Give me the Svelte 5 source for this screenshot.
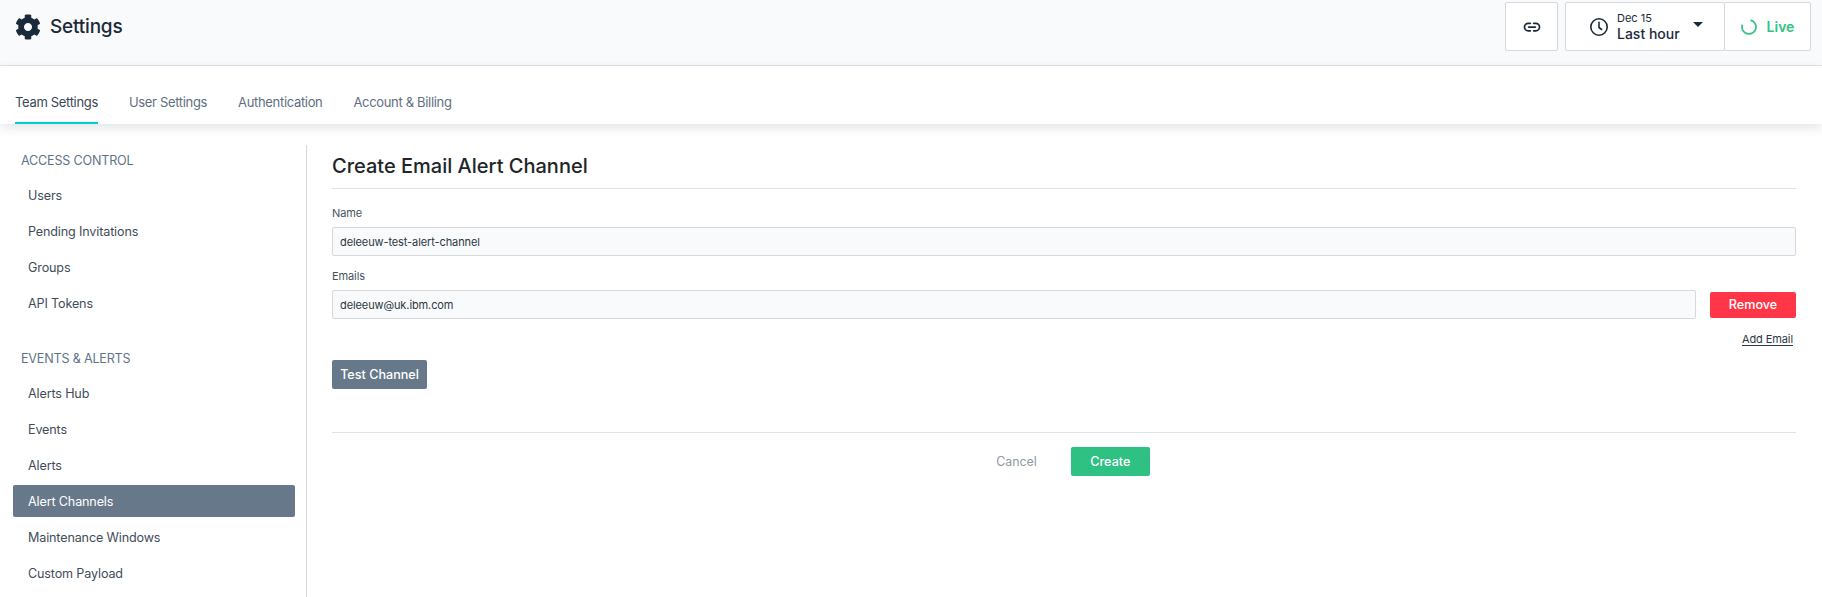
<script>
  const tabs = ['Team Settings', 'User Settings', 'Authentication', 'Account & Billing'];
  const groups = [
    { title: 'ACCESS CONTROL', items: ['Users', 'Pending Invitations', 'Groups', 'API Tokens'] },
    { title: 'EVENTS & ALERTS', items: ['Alerts Hub', 'Events', 'Alerts', 'Alert Channels', 'Maintenance Windows', 'Custom Payload'] }
  ];
</script>

<div class="page">
  <header class="topbar">
    <div class="brand">
      <svg class="gear" viewBox="0 0 512 512" width="26" height="26" aria-hidden="true">
        <path fill="#1b2a3a" d="M487.4 315.7l-42.6-24.6c4.3-23.2 4.3-47 0-70.2l42.6-24.6c4.9-2.8 7.1-8.6 5.5-14-11.1-35.6-30-67.8-54.7-94.6-3.8-4.1-10-5.1-14.8-2.3L380.8 110c-17.9-15.4-38.5-27.3-60.8-35.1V25.8c0-5.6-3.9-10.5-9.4-11.7-36.7-8.2-74.3-7.8-109.2 0-5.5 1.2-9.4 6.1-9.4 11.7V75c-22.2 7.9-42.8 19.8-60.8 35.1L88.7 85.5c-4.9-2.8-11-1.9-14.8 2.3-24.7 26.7-43.6 58.9-54.7 94.6-1.7 5.4.6 11.2 5.5 14L67.3 221c-4.3 23.2-4.3 47 0 70.2l-42.6 24.6c-4.9 2.8-7.1 8.6-5.5 14 11.1 35.6 30 67.8 54.7 94.6 3.8 4.1 10 5.1 14.8 2.3l42.6-24.6c17.9 15.4 38.5 27.3 60.8 35.1v49.2c0 5.6 3.9 10.5 9.4 11.7 36.7 8.2 74.3 7.8 109.2 0 5.5-1.2 9.4-6.1 9.4-11.7v-49.2c22.2-7.9 42.8-19.8 60.8-35.1l42.6 24.6c4.9 2.8 11 1.9 14.8-2.3 24.7-26.7 43.6-58.9 54.7-94.6 1.5-5.5-.7-11.3-5.6-14.1zM256 336c-44.1 0-80-35.9-80-80s35.9-80 80-80 80 35.9 80 80-35.9 80-80 80z"/>
      </svg>
      <h1>Settings</h1>
    </div>
    <div class="actions">
      <button class="box link-btn" aria-label="Copy link">
        <svg viewBox="0 0 24 24" width="20" height="20" fill="none" stroke="#1b2a3a" stroke-width="2.1" stroke-linecap="round">
          <path d="M10 7.5H7.5a4.5 4.5 0 0 0 0 9H10M14 7.5h2.5a4.5 4.5 0 0 1 0 9H14M8 12h8"/>
        </svg>
      </button>
      <div class="time-group">
        <button class="box time">
          <svg viewBox="0 0 20 20" width="20" height="20" fill="none" stroke="#1b2a3a" stroke-width="1.6" stroke-linecap="round" stroke-linejoin="round">
            <circle cx="10" cy="10" r="8.2"/><path d="M10 5.2V10.5l2.6 2"/>
          </svg>
          <span class="time-text"><span class="date">Dec 15</span><span class="range">Last hour</span></span>
          <span class="caret"></span>
        </button>
        <button class="box live">
          <svg viewBox="0 0 16 16" width="16" height="16" fill="none" stroke="#31c283" stroke-width="1.7">
            <path d="M9.4 1.1A7 7 0 1 1 1.4 5.6"/>
          </svg>
          <span>Live</span>
        </button>
      </div>
    </div>
  </header>

  <nav class="tabs">
    {#each tabs as tab, i}
      <a href="#top" class="tab" class:active={i === 0}>{tab}</a>
    {/each}
  </nav>

  <div class="body">
    <aside class="side">
      <div class="side-inner">
        {#each groups as g}
          <section class="group">
            <h3>{g.title}</h3>
            {#each g.items as item}
              <a href="#top" class="item" class:current={item === 'Alert Channels'}>{item}</a>
            {/each}
          </section>
        {/each}
      </div>
    </aside>

    <main class="main">
      <h2>Create Email Alert Channel</h2>
      <div class="form">
        <label class="lbl" for="name">Name</label>
        <input id="name" class="field" value="deleeuw-test-alert-channel" />
        <label class="lbl second" for="email">Emails</label>
        <div class="email-row">
          <input id="email" class="field" value="deleeuw@uk.ibm.com" />
          <button class="remove">Remove</button>
        </div>
        <div class="add-row"><a href="#top" class="add">Add Email</a></div>
        <button class="test">Test Channel</button>
      </div>
      <div class="footer">
        <a href="#top" class="cancel">Cancel</a>
        <button class="create">Create</button>
      </div>
    </main>
  </div>
</div>

<style>
  :global(body) {
    margin: 0;
    background: #fff;
    font-family: Inter, "Liberation Sans", sans-serif;
    overflow: hidden;
  }
  .page { width: 1822px; height: 597px; overflow: hidden; color: #1b2a3a; }
  button { font-family: inherit; cursor: pointer; }
  a { text-decoration: none; }

  .topbar {
    box-sizing: border-box;
    height: 66px;
    background: #f9fafc;
    border-bottom: 1px solid #dfe4ea;
    display: flex;
    justify-content: space-between;
    padding: 2px 11px 0 15px;
  }
  .brand { display: flex; align-items: center; gap: 9px; height: 50px; }
  .gear { display: block; }
  h1 { margin: 0; font-size: 19px; letter-spacing: -0.2px; font-weight: 500; line-height: 24px; color: #1b2a3a; }
  .actions { display: flex; gap: 7px; height: 49px; }
  .box {
    box-sizing: border-box;
    height: 49px;
    background: #fff;
    border: 1px solid #d5d9de;
    border-radius: 2px;
    padding: 0;
    display: flex;
    align-items: center;
    justify-content: center;
  }
  .link-btn { width: 53px; }
  .time-group { display: flex; }
  .time { width: 160px; justify-content: flex-start; padding-left: 23px; }
  .time-text { display: flex; flex-direction: column; align-items: flex-start; margin-left: 8px; }
  .date { font-size: 11px; line-height: 14px; color: #1b2a3a; }
  .range { font-size: 14px; font-weight: 500; line-height: 18px; color: #1b2a3a; }
  .caret {
    width: 0; height: 0;
    margin-left: 13px;
    margin-top: -4px;
    border-left: 5px solid transparent;
    border-right: 5px solid transparent;
    border-top: 5px solid #1b2a3a;
  }
  .live {
    width: 87px;
    gap: 10px;
    margin-left: -1px;
    color: #31c283;
    font-size: 14px;
    font-weight: 600;
  }

  .tabs {
    height: 58px;
    box-sizing: border-box;
    padding: 0 15px;
    display: flex;
    gap: 31px;
    align-items: flex-end;
    background: #fff;
    box-shadow: 0 4px 10px rgba(27, 42, 58, 0.12);
    position: relative;
  }
  .tab {
    font-size: 13px;
    letter-spacing: -0.33px;
    line-height: 16px;
    color: #5f6f7f;
    padding-bottom: 12px;
    border-bottom: 2px solid transparent;
  }
  .tab.active { color: #3a4856; border-bottom-color: #00cfcf; }

  .body { display: flex; padding-top: 21px; }
  .side { width: 307px; flex: none; }
  .side-inner {
    box-sizing: border-box;
    height: 460px;
    border-right: 1px solid #d5d9de;
    padding: 1px 11px 0 13px;
  }
  .group + .group { margin-top: 25px; }
  h3 {
    margin: 0;
    padding-left: 8px;
    font-size: 12.6px;
    letter-spacing: -0.2px;
    font-weight: 400;
    height: 29px;
    line-height: 30px;
    color: #5f7489;
  }
  .item {
    display: flex;
    align-items: center;
    box-sizing: border-box;
    height: 32px;
    margin: 4px 0;
    padding-left: 15px;
    font-size: 12.6px;
    letter-spacing: -0.15px;
    color: #3f4d5b;
    border-radius: 2px;
  }
  .item.current { background: #67788a; color: #fff; }

  .main { flex: 1; padding: 0 26px 0 25px; min-width: 0; }
  h2 {
    margin: 0;
    font-size: 20px;
    font-weight: 500;
    line-height: 43px;
    height: 43px;
    color: #212529;
    border-bottom: 1px solid #dfe4ea;
  }
  .form { display: flex; flex-direction: column; align-items: flex-start; padding-top: 17px; }
  .lbl { font-size: 11px; letter-spacing: -0.1px; line-height: 14px; color: #46535f; margin-bottom: 7px; }
  .lbl.second { margin-top: 13px; margin-bottom: 7px; }
  .field {
    box-sizing: border-box;
    width: 100%;
    height: 29px;
    padding: 0 7px;
    background: #f9fafc;
    border: 1px solid #d5d9de;
    border-radius: 2px;
    font: 400 11px Inter, "Liberation Sans", sans-serif;
    letter-spacing: -0.1px;
    color: #2b3742;
    outline: none;
  }
  .email-row { display: flex; align-items: center; width: 100%; gap: 14px; }
  .email-row .field { flex: 1; min-width: 0; }
  .remove {
    width: 86px;
    height: 26px;
    flex: none;
    background: #ff3648;
    color: #fff;
    border: 0;
    border-radius: 2px;
    font-size: 12.6px;
    font-weight: 500;
  }
  .add-row { width: 100%; display: flex; justify-content: flex-end; margin-top: 13px; padding-right: 3px; box-sizing: border-box; }
  .add { font-size: 11px; letter-spacing: -0.1px; line-height: 14px; color: #2b3742; text-decoration: underline; text-underline-offset: 2px; }
  .test {
    margin-top: 14px;
    width: 95px;
    height: 29px;
    background: #67788a;
    color: #fff;
    border: 0;
    border-radius: 2px;
    font-size: 12.6px;
    font-weight: 500;
    padding: 0;
  }
  .footer {
    margin-top: 43px;
    border-top: 1px solid #dfe4ea;
    padding-top: 14px;
    padding-left: 18px;
    display: flex;
    justify-content: center;
    align-items: center;
    gap: 34px;
  }
  .cancel { font-size: 12.4px; color: #8d99a5; }
  .create {
    width: 79px;
    height: 29px;
    background: #2fc083;
    color: #fff;
    border: 0;
    border-radius: 2px;
    font-size: 12.6px;
    font-weight: 500;
  }
</style>
